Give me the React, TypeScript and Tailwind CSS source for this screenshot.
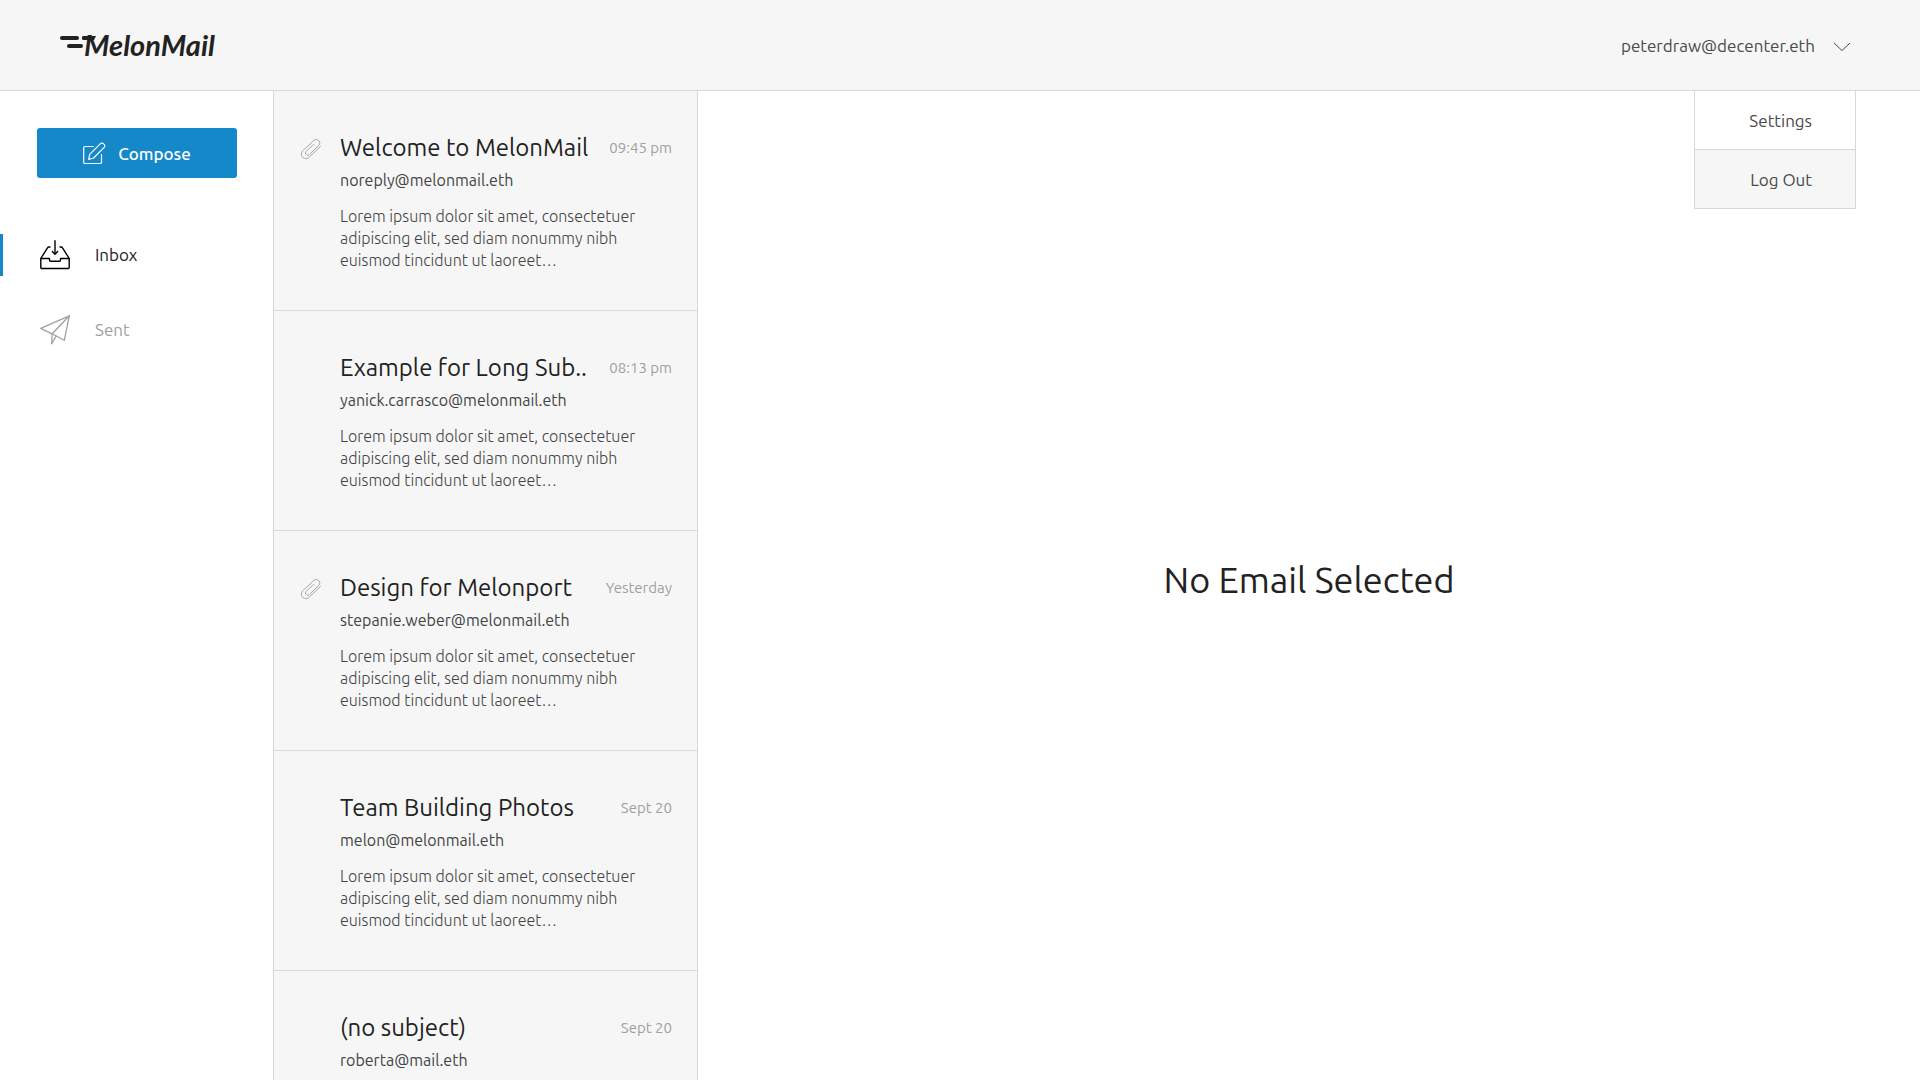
import { useState } from 'react';

type Mail = {
  subject: string;
  from: string;
  time: string;
  attachment?: boolean;
};

const SNIPPET =
  'Lorem ipsum dolor sit amet, consectetuer adipiscing elit, sed diam nonummy nibh euismod tincidunt ut laoreet…';

const MAILS: Mail[] = [
  { subject: 'Welcome to MelonMail', from: 'noreply@melonmail.eth', time: '09:45 pm', attachment: true },
  { subject: 'Example for Long Sub..', from: 'yanick.carrasco@melonmail.eth', time: '08:13 pm' },
  { subject: 'Design for Melonport', from: 'stepanie.weber@melonmail.eth', time: 'Yesterday', attachment: true },
  { subject: 'Team Building Photos', from: 'melon@melonmail.eth', time: 'Sept 20' },
  { subject: '(no subject)', from: 'roberta@mail.eth', time: 'Sept 20' },
];

function Logo() {
  return (
    <a href="#home" className="flex items-center pb-0.5 text-[#222]" aria-label="MelonMail">
      <svg width="28" height="24" viewBox="0 0 28 24" className="-mr-1 shrink-0" fill="none" stroke="currentColor" strokeWidth="4" strokeLinecap="round" aria-hidden="true">
        <path d="M2 5h15" />
        <path d="M9 13h12" />
        <path d="M24 5h2" />
      </svg>
      <span className="relative font-['Lato',sans-serif] text-[29px] leading-8 font-bold italic">
        <svg width="14" height="4" viewBox="0 0 14 4" className="absolute top-[7px] -left-[2px]" fill="currentColor" aria-hidden="true">
          <path d="M2 0h12l-2 4H2a2 2 0 0 1 0-4z" />
        </svg>
        MelonMail
      </span>
    </a>
  );
}

function ComposeIcon() {
  return (
    <svg width="23" height="23" viewBox="0 0 23 23" fill="none" stroke="currentColor" strokeWidth="1.2" strokeLinejoin="round" strokeLinecap="round" aria-hidden="true">
      <path d="M10.5 4.5H2a1.3 1.3 0 0 0-1.3 1.3v14.4A1.3 1.3 0 0 0 2 21.5h15.2a1.3 1.3 0 0 0 1.3-1.3V12.5" />
      <path d="M5.7 17.3l1-5L17.2 1.8a2.4 2.4 0 0 1 3.5 0l.3.3a2.4 2.4 0 0 1 0 3.5L10.6 16z" />
    </svg>
  );
}

function InboxIcon() {
  return (
    <svg width="30" height="30" viewBox="0 0 30 30" fill="none" stroke="#000" strokeWidth="1.4" strokeLinejoin="round" strokeLinecap="round" aria-hidden="true">
      <path d="M10 7H8.8a1.5 1.5 0 0 0-1.3.8L.8 18.5v9a1 1 0 0 0 1 1h26.4a1 1 0 0 0 1-1v-9L22.5 7.8a1.5 1.5 0 0 0-1.3-.8H20" />
      <path d="M.8 18.5h8.7v1.8a1 1 0 0 0 1 1h9a1 1 0 0 0 1-1v-1.8h8.7" />
      <path d="M15 .7v13" />
      <path d="M12.3 11.5l2.7 2.7 2.7-2.7" />
    </svg>
  );
}

function SentIcon() {
  return (
    <svg width="30" height="30" viewBox="0 0 30 30" fill="none" stroke="currentColor" strokeWidth="1.3" strokeLinejoin="round" strokeLinecap="round" aria-hidden="true">
      <path d="M.7 13.3L29.3.8l-5 24.5-12.3-6.5z" />
      <path d="M29.3.8L12.2 18.8 11.7 28.8l4.5-7.8" />
    </svg>
  );
}

function ClipIcon() {
  return (
    <svg width="22" height="22" viewBox="0 0 22 22" fill="none" stroke="currentColor" strokeWidth="1" strokeLinecap="round" role="img" aria-label="Has attachment">
      <path d="M20.5 8.5L9.2 19.2a4.6 4.6 0 0 1-6.5.2l-.2-.2a4.6 4.6 0 0 1 .2-6.4L14 2.2a3.6 3.6 0 0 1 5 5.1L9.3 16.5a2.2 2.2 0 0 1-3.2-3.1L13.5 6.500" />
    </svg>
  );
}

function MailRow({ mail, onSelect }: { mail: Mail; onSelect: () => void }) {
  return (
    <li className="border-b border-[#d8d8d8]">
      <button type="button" onClick={onSelect} className="flex w-full items-start pt-10 pr-[25px] pb-[39px] pl-[26px] text-left">
        <span className="mt-[7px] w-10 shrink-0 text-[#a8a8a8]">{mail.attachment && <ClipIcon />}</span>
        <span className="block min-w-0 flex-1">
          <span className="flex items-center justify-between">
            <span className="text-2xl leading-[34px] whitespace-nowrap text-[#222]">{mail.subject}</span>
            <time className="text-[15px] leading-[34px] whitespace-nowrap text-[#a0a0a0]">{mail.time}</time>
          </span>
          <span className="block text-base leading-[30px] text-[#444]">{mail.from}</span>
          <span className="mt-2.5 block w-[310px] max-w-full text-base leading-[22px] font-light text-[#444]">{SNIPPET}</span>
        </span>
      </button>
    </li>
  );
}

export default function App() {
  const [folder, setFolder] = useState('Inbox');
  const [menuOpen, setMenuOpen] = useState(true);
  const folders = [
    { name: 'Inbox', icon: <InboxIcon /> },
    { name: 'Sent', icon: <SentIcon /> },
  ];

  return (
    <div className="flex h-screen flex-col bg-white font-['Ubuntu','Noto_Sans',sans-serif] text-[#222]">
      <header className="relative flex h-[91px] shrink-0 items-center justify-between border-b border-[#d8d8d8] bg-[#f6f6f6] pt-0.5 pr-[69px] pl-[60px]">
        <Logo />
        <button type="button" aria-expanded={menuOpen} onClick={() => setMenuOpen(!menuOpen)} className="flex items-center gap-[18px] text-[17px] leading-8 text-[#4a4a4a]">
          peterdraw@decenter.eth
          <svg width="18" height="10" viewBox="0 0 18 10" fill="none" stroke="currentColor" strokeWidth="1" className="mt-0.5" aria-hidden="true">
            <path d="M1 1l8 7.5L17 1" />
          </svg>
        </button>
        {menuOpen && (
          <nav aria-label="Account" className="absolute top-full right-16 z-10 mt-px flex w-[162px] flex-col border-x border-[#d8d8d8] bg-white text-right text-[17px] text-[#4a4a4a]">
            <a href="#settings" className="border-b border-[#d8d8d8] pt-[14px] pr-[43px] pb-3 leading-8">Settings</a>
            <a href="#logout" className="border-b border-[#d8d8d8] bg-[#f6f6f6] pt-[14px] pr-[43px] pb-3 leading-8">Log Out</a>
          </nav>
        )}
      </header>

      <div className="flex min-h-0 flex-1">
        <aside className="w-[273px] shrink-0 pt-[37px]">
          <div className="pr-9 pl-[37px]">
            <button type="button" className="flex h-[50px] w-full items-center justify-center gap-3 rounded-[3px] bg-[#1488c8] pt-px text-[17px] font-medium text-white">
              <ComposeIcon />
              Compose
            </button>
          </div>
          <nav aria-label="Folders" className="mt-14 flex flex-col gap-[33px]">
            {folders.map(({ name, icon }) => (
              <a
                key={name}
                href={'#' + name.toLowerCase()}
                onClick={() => setFolder(name)}
                className={
                  folder === name
                    ? 'flex h-[42px] items-center gap-[25px] border-l-[3px] border-[#1488c8] pl-[37px] text-[17px] text-[#222]'
                    : 'flex h-[42px] items-center gap-[25px] border-l-[3px] border-transparent pl-[37px] text-[17px] text-[#a0a0a0]'
                }
              >
                {icon}
                {name}
              </a>
            ))}
          </nav>
        </aside>

        <ul className="w-[425px] shrink-0 overflow-y-auto border-x border-[#d8d8d8] bg-[#f6f6f6] [scrollbar-width:none]">
          {MAILS.map((mail) => (
            <MailRow key={mail.subject} mail={mail} onSelect={() => setMenuOpen(false)} />
          ))}
        </ul>

        <main className="flex flex-1 items-center justify-center pb-3">
          <h1 className="text-4xl">No Email Selected</h1>
        </main>
      </div>
    </div>
  );
}
